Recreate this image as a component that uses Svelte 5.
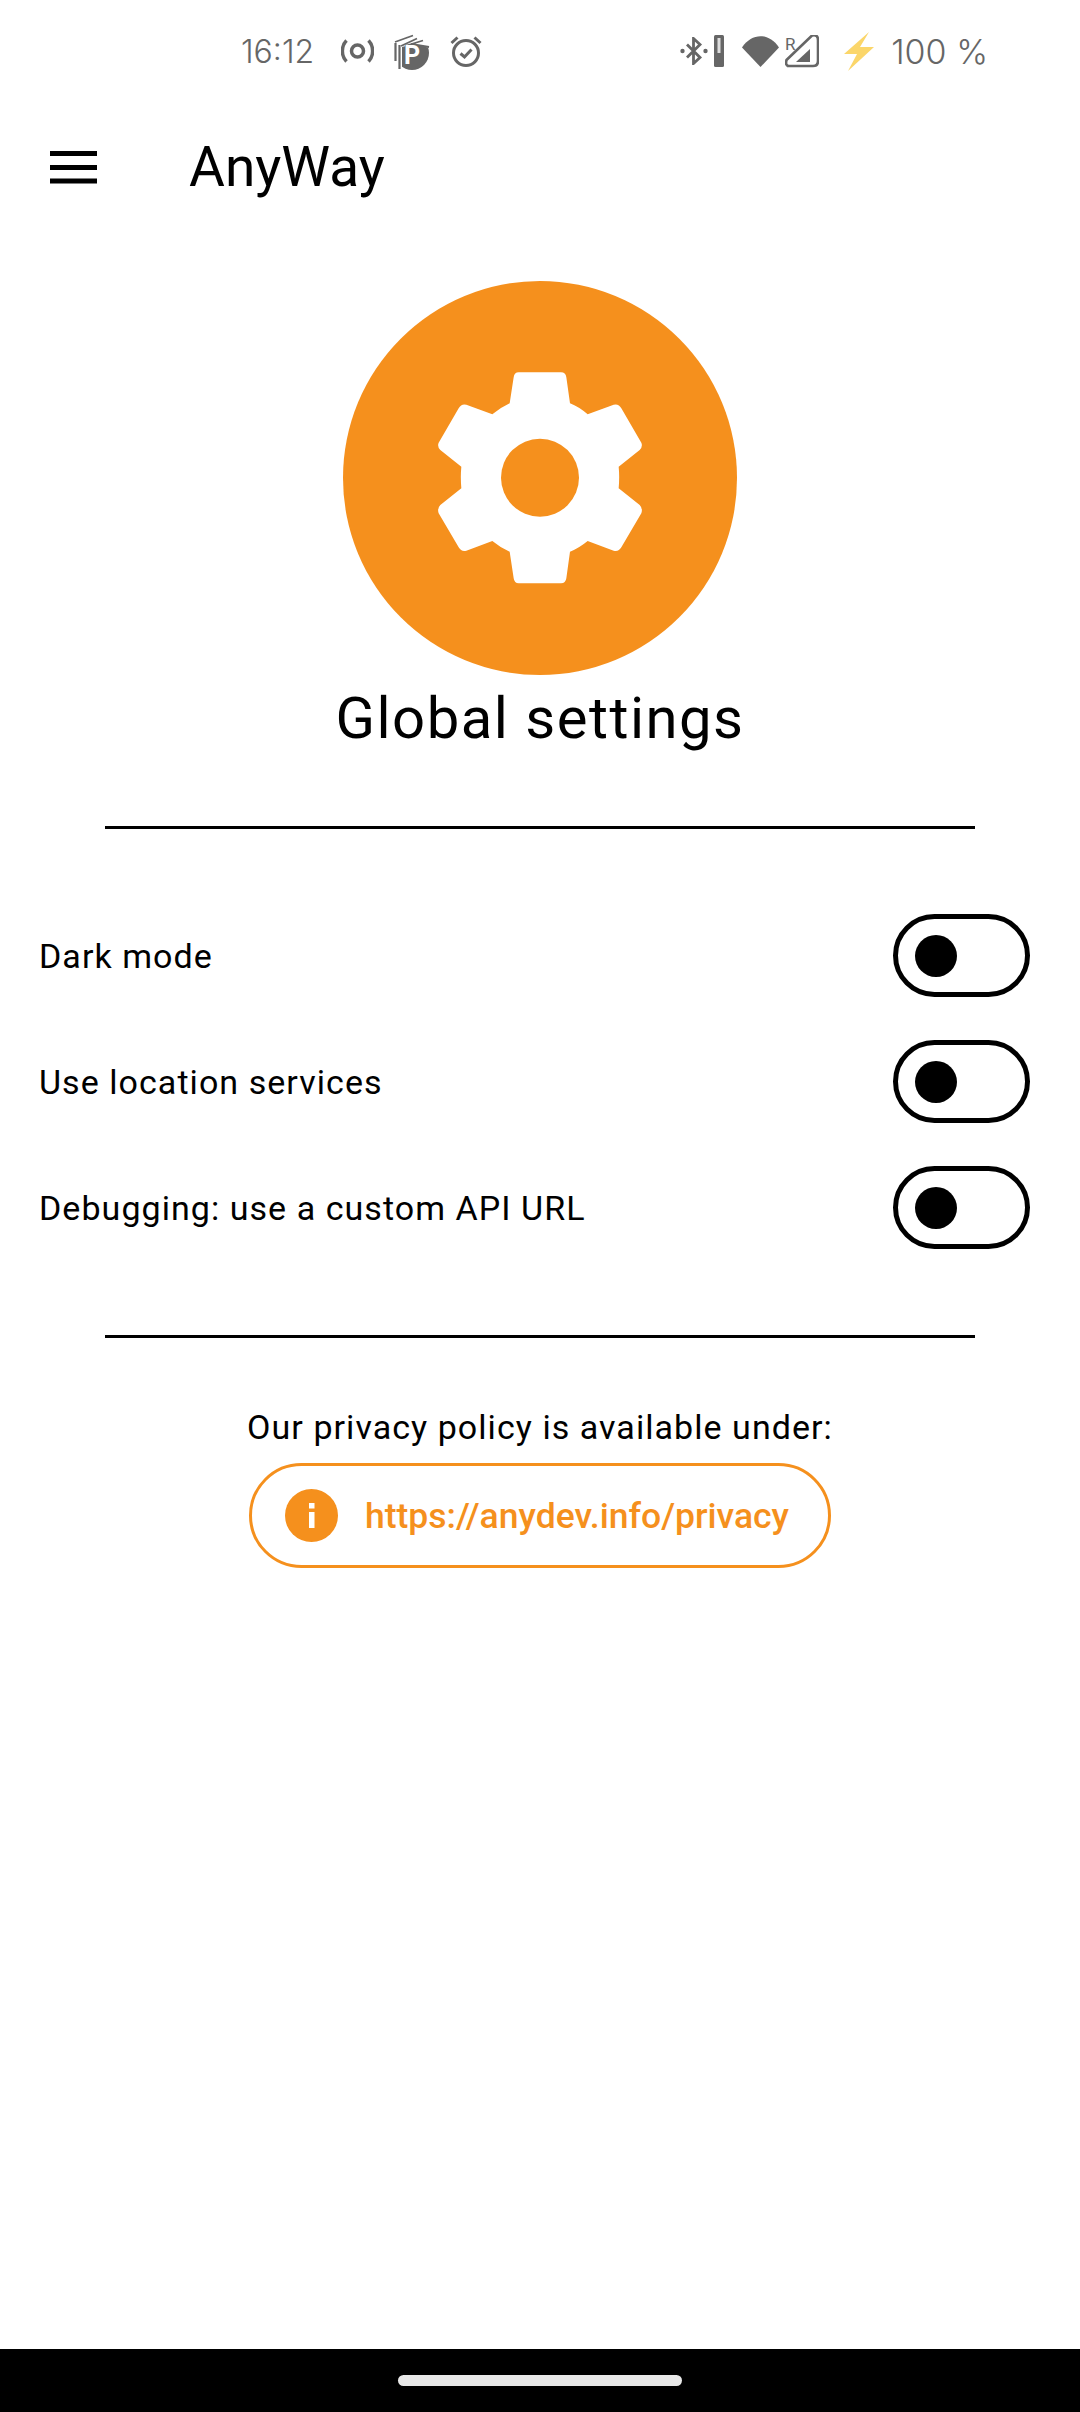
<script>
  const settings = ["Dark mode", "Use location services", "Debugging: use a custom API URL"];
</script>

<div class="screen">
  <div class="status">
    <div class="status-left">
      <span class="clock">16:12</span>
      <svg class="ic-cast" viewBox="0 0 33 24" fill="none" stroke="#666" stroke-width="3.500">
        <circle cx="16.500" cy="12" r="6" />
        <path d="M5.500 1.500C0 7 0 17 5.500 22.500M27.500 1.500C33 7 33 17 27.500 22.500" />
      </svg>
      <svg class="ic-park" viewBox="0 0 37 37">
        <circle cx="19" cy="20" r="17" fill="#666" />
        <path d="M1 8L20 1L32 4L37 15L20 11L9 14L9 37L1 30Z" fill="#fff" />
        <path d="M2 9L20 2.500M8 13L24 5.500M12 13L30 7.500M18 11L36 14" stroke="#666" stroke-width="1.800" fill="none" />
        <path d="M2.500 10V28M6.500 12V36" stroke="#666" stroke-width="2.200" fill="none" />
        <text x="11" y="31" class="park-p">P</text>
      </svg>
      <svg class="ic-alarm" viewBox="0 0 32 32" fill="none" stroke="#666" stroke-width="3">
        <circle cx="16" cy="18" r="12.500" />
        <path d="M1.500 8L7.500 2.500M30.500 8L24.500 2.500" />
        <path d="M10.500 18.500L14.500 22L21.500 14.500" />
      </svg>
    </div>
    <div class="status-right">
      <svg class="ic-bt" viewBox="0 0 28 28" fill="none" stroke="#666" stroke-width="2.800">
        <path d="M7 7.500L20 20.500L13.500 26.500V1.500L20 7.500L7 20.500" />
        <circle cx="2.500" cy="14" r="2.200" fill="#666" stroke="none" />
        <circle cx="25.500" cy="14" r="2.200" fill="#666" stroke="none" />
      </svg>
      <svg class="ic-batt" viewBox="0 0 10 32">
        <rect width="10" height="32" rx="1.500" fill="#666" />
        <rect x="3.500" y="3" width="3" height="15" fill="#ddd" />
      </svg>
      <svg class="ic-wifi" viewBox="0 0 37 31">
        <path d="M0 11.500C10 -3.500 27 -3.500 37 11.500L18.500 31Z" fill="#666" />
      </svg>
      <svg class="ic-signal" viewBox="0 0 34 33" fill="none">
        <path d="M2 32H28Q33 32 33 27V6Q33 0 27 1.500L1.500 26Q0 32 4 32" stroke="#666" stroke-width="2.600" transform="translate(0,-1)" />
        <path d="M11 27L25 14V27Z" fill="#666" />
        <text x="0" y="15" class="signal-r">R</text>
      </svg>
      <svg class="ic-bolt" viewBox="0 0 30 39">
        <path d="M25 0L0 22H13L4 39L30 15H16Z" fill="#fbd66a" />
      </svg>
      <span class="batt-text">100 %</span>
    </div>
  </div>

  <header class="appbar">
    <svg class="menu" viewBox="0 0 47 33">
      <rect y="0" width="47" height="5" />
      <rect y="14" width="47" height="5" />
      <rect y="27.500" width="47" height="5" />
    </svg>
    <h1>AnyWay</h1>
  </header>

  <main>
    <svg class="hero" viewBox="38 33 1182 1182">
      <circle cx="629" cy="624" r="591" fill="#f5901d" />
      <path
        fill="#fff"
        d="M565 307L692 307Q706 307 708 322L719 400Q745 410 772 433L850 404Q865 400 873 415L933 518Q938 530 928 540L865 590Q868 620 865 655L928 705Q938 715 933 730L873 832Q865 846 850 842L772 813Q745 835 719 845L708 925Q706 940 692 940L565 940Q552 940 550 925L538 845Q510 833 486 813L408 842Q393 846 385 832L325 730Q320 715 330 705L393 655Q390 620 393 590L330 540Q320 530 325 518L385 415Q393 400 408 404L486 433Q510 413 538 400L550 322Q552 307 565 307Z"
      />
      <circle cx="629" cy="623" r="117" fill="#f5901d" />
    </svg>
    <h2>Global settings</h2>
    <hr class="rule-top" />

    <div class="rows">
      {#each settings as label}
        <div class="row">
          <span>{label}</span>
          <div class="toggle"><div class="knob"></div></div>
        </div>
      {/each}
    </div>

    <hr class="rule-bottom" />

    <p class="privacy">Our privacy policy is available under:</p>
    <div class="link">
      <svg class="info" viewBox="0 0 53 53">
        <circle cx="26.500" cy="26.500" r="26.500" fill="#f5901d" />
        <rect x="24" y="14" width="5.500" height="5.500" fill="#fff" />
        <rect x="24" y="23" width="5.500" height="16" fill="#fff" />
      </svg>
      <span>https://anydev.info/privacy</span>
    </div>
  </main>

  <div class="navbar"><div class="pill"></div></div>
</div>

<style>
  :global(body) {
    margin: 0;
    background: #fff;
  }

  .screen {
    min-height: 2412px;
    display: flex;
    flex-direction: column;
    font-family: Roboto, sans-serif;
    color: #000;
  }

  .status {
    height: 102px;
    display: flex;
    justify-content: space-between;
    align-items: center;
    padding: 0 92px 0 241px;
    color: #666;
  }

  .status-left,
  .status-right {
    display: flex;
    align-items: center;
  }

  .clock,
  .batt-text {
    font-family: Inter, sans-serif;
    font-weight: 300;
    font-size: 32px;
  }

  .batt-text {
    margin-left: 17px;
    font-size: 34px;
  }

  .ic-cast {
    width: 33px;
    height: 24px;
    margin-left: 27px;
  }
  .ic-park {
    width: 37px;
    height: 37px;
    margin-left: 19px;
  }
  .park-p {
    font: 700 25px Roboto, sans-serif;
    fill: #fff;
  }
  .ic-alarm {
    width: 32px;
    height: 32px;
    margin-left: 20px;
  }
  .ic-bt {
    width: 28px;
    height: 28px;
  }
  .ic-batt {
    width: 10px;
    height: 32px;
    margin-left: 6px;
  }
  .ic-wifi {
    width: 37px;
    height: 31px;
    margin-left: 18px;
  }
  .ic-signal {
    width: 34px;
    height: 33px;
    margin-left: 6px;
  }
  .signal-r {
    font: 400 17px Roboto, sans-serif;
    fill: #666;
  }
  .ic-bolt {
    width: 30px;
    height: 39px;
    margin-left: 25px;
  }

  .appbar {
    height: 130px;
    display: flex;
    align-items: center;
    padding-left: 50px;
    box-sizing: border-box;
  }

  .menu {
    width: 47px;
    height: 33px;
    fill: #000;
  }

  h1 {
    margin: 0 0 0 92px;
    font-size: 55px;
    font-weight: 400;
    line-height: 1;
  }

  main {
    flex: 1;
    display: flex;
    flex-direction: column;
    align-items: center;
    padding-top: 49px;
  }

  .hero {
    width: 394px;
    height: 394px;
    display: block;
  }

  h2 {
    margin: 9px 0 0;
    font-size: 58px;
    font-weight: 400;
    line-height: 68px;
    letter-spacing: 1.500px;
  }

  hr {
    width: 870px;
    height: 3px;
    border: 0;
    margin: 0;
    background: #000;
  }

  .rule-top {
    margin-top: 74px;
  }

  .rows {
    align-self: stretch;
    display: flex;
    flex-direction: column;
    gap: 43px;
    padding: 85px 50px 86px 39px;
  }

  .row {
    display: flex;
    justify-content: space-between;
    align-items: center;
    font-size: 34px;
    letter-spacing: 1.050px;
  }

  .toggle {
    width: 137px;
    height: 83px;
    box-sizing: border-box;
    border: 5px solid #000;
    border-radius: 42px;
    display: flex;
    align-items: center;
    padding-left: 17px;
  }

  .knob {
    width: 42px;
    height: 42px;
    border-radius: 50%;
    background: #000;
  }

  .privacy {
    margin: 69px 0 0;
    font-size: 34px;
    line-height: 40px;
    letter-spacing: 1.050px;
  }

  .link {
    width: 582px;
    height: 105px;
    margin-top: 16px;
    box-sizing: border-box;
    border: 3px solid #f5901d;
    border-radius: 53px;
    display: flex;
    align-items: center;
    padding-left: 33px;
    color: #f5901d;
    font-size: 35.500px;
    font-weight: 500;
  }

  .info {
    width: 53px;
    height: 53px;
    margin-right: 27px;
  }

  .navbar {
    height: 63px;
    background: #000;
    display: flex;
    justify-content: center;
    align-items: center;
  }

  .pill {
    width: 284px;
    height: 11px;
    border-radius: 6px;
    background: #e8e8e8;
  }
</style>
